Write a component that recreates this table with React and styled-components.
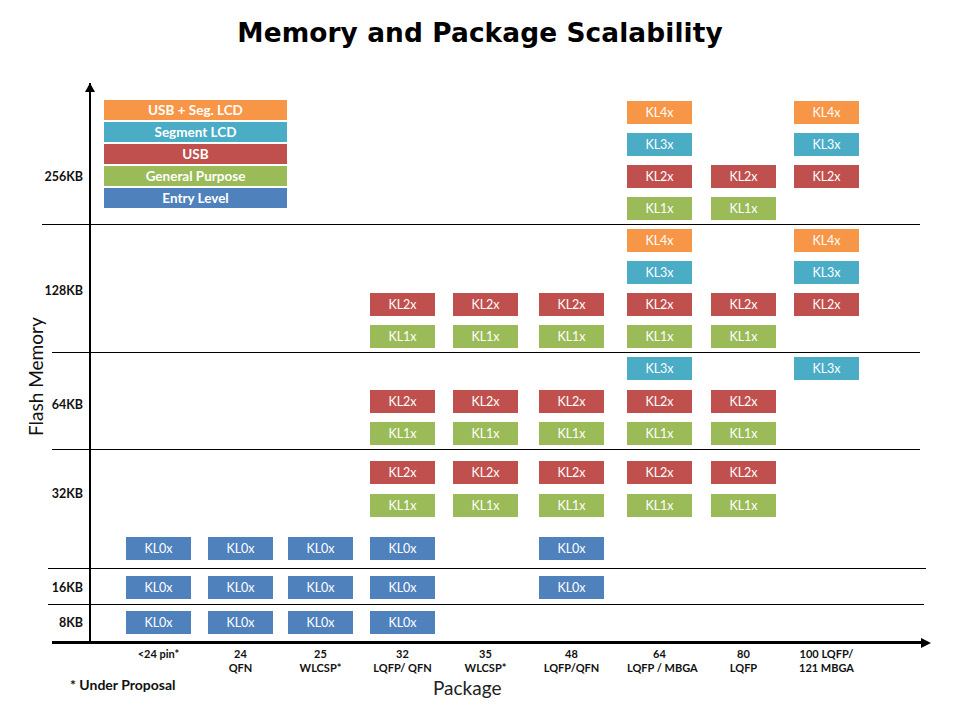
import React from "react";
import styled, { createGlobalStyle } from "styled-components";

const GlobalStyle = createGlobalStyle`
  html, body {
    margin: 0;
    padding: 0;
    background: #fff;
  }
  body {
    font-family: Lato, "Open Sans", "Liberation Sans", sans-serif;
    color: #000;
  }
`;

const COLORS = {
  kl0: "#4f81bd",
  kl1: "#9bbb59",
  kl2: "#c0504d",
  kl3: "#4bacc6",
  kl4: "#f79646",
};

const NAMES = { kl0: "KL0x", kl1: "KL1x", kl2: "KL2x", kl3: "KL3x", kl4: "KL4x" };

// spacer track, then one track per package column
const TRACKS = "22px 82px 80px 82px 83px 86px 88px 84px 83px 65px";

const legend = [
  { text: "USB + Seg. LCD", kind: "kl4" },
  { text: "Segment LCD", kind: "kl3" },
  { text: "USB", kind: "kl2" },
  { text: "General Purpose", kind: "kl1" },
  { text: "Entry Level", kind: "kl0" },
];

const packages = [
  ["<24 pin*"],
  ["24", "QFN"],
  ["25", "WLCSP*"],
  ["32", "LQFP/ QFN"],
  ["35", "WLCSP*"],
  ["48", "LQFP/QFN"],
  ["64", "LQFP / MBGA"],
  ["80", "LQFP"],
  ["100 LQFP/", "121 MBGA"],
];

// boxes: [row, package column (1-9), kind]
const bands = [
  {
    label: "256KB",
    labelTop: 86,
    height: 141,
    pad: 18,
    rows: "32px 32px 32px 23px",
    bleed: 10,
    right: 0,
    legend: true,
    boxes: [
      [1, 7, "kl4"], [2, 7, "kl3"], [3, 7, "kl2"], [4, 7, "kl1"],
      [3, 8, "kl2"], [4, 8, "kl1"],
      [1, 9, "kl4"], [2, 9, "kl3"], [3, 9, "kl2"],
    ],
  },
  {
    label: "128KB",
    labelTop: 58,
    height: 127,
    pad: 4,
    rows: "32px 32px 32px 23px",
    bleed: 0,
    right: 0,
    boxes: [
      [3, 4, "kl2"], [4, 4, "kl1"],
      [3, 5, "kl2"], [4, 5, "kl1"],
      [3, 6, "kl2"], [4, 6, "kl1"],
      [1, 7, "kl4"], [2, 7, "kl3"], [3, 7, "kl2"], [4, 7, "kl1"],
      [3, 8, "kl2"], [4, 8, "kl1"],
      [1, 9, "kl4"], [2, 9, "kl3"], [3, 9, "kl2"],
    ],
  },
  {
    label: "64KB",
    labelTop: 44,
    height: 96,
    pad: 4,
    rows: "33px 32px 23px",
    bleed: 0,
    right: 0,
    boxes: [
      [2, 4, "kl2"], [3, 4, "kl1"],
      [2, 5, "kl2"], [3, 5, "kl1"],
      [2, 6, "kl2"], [3, 6, "kl1"],
      [1, 7, "kl3"], [2, 7, "kl2"], [3, 7, "kl1"],
      [2, 8, "kl2"], [3, 8, "kl1"],
      [1, 9, "kl3"],
    ],
  },
  {
    label: "32KB",
    labelTop: 36,
    height: 118,
    pad: 11,
    rows: "33px 43px 23px",
    bleed: 4,
    right: -6,
    boxes: [
      [1, 4, "kl2"], [2, 4, "kl1"],
      [1, 5, "kl2"], [2, 5, "kl1"],
      [1, 6, "kl2"], [2, 6, "kl1"],
      [1, 7, "kl2"], [2, 7, "kl1"],
      [1, 8, "kl2"], [2, 8, "kl1"],
      [3, 1, "kl0"], [3, 2, "kl0"], [3, 3, "kl0"], [3, 4, "kl0"], [3, 6, "kl0"],
    ],
  },
  {
    label: "16KB",
    labelTop: 11,
    height: 35,
    pad: 7,
    rows: "23px",
    bleed: 4,
    right: -4,
    boxes: [[1, 1, "kl0"], [1, 2, "kl0"], [1, 3, "kl0"], [1, 4, "kl0"], [1, 6, "kl0"]],
  },
  {
    label: "8KB",
    labelTop: 10,
    height: 36,
    pad: 6,
    rows: "23px",
    bleed: 0,
    right: -2,
    axis: true,
    boxes: [[1, 1, "kl0"], [1, 2, "kl0"], [1, 3, "kl0"], [1, 4, "kl0"]],
  },
];

function App() {
  return (
    <Slide>
      <GlobalStyle />
      <Title>Memory and Package Scalability</Title>
      <Body>
        <YTitle>
          <span>Flash Memory</span>
        </YTitle>
        <Chart>
          {bands.map((band, i) => (
            <Band
              key={band.label}
              $height={band.height}
              $bleed={band.bleed}
              $right={band.right}
              $axis={band.axis}
            >
              <MemLabel $top={band.labelTop}>
                <span>{band.label}</span>
              </MemLabel>
              <Plot $pad={band.pad} $rows={band.rows}>
                {i === 0 && <UpArrow />}
                {band.legend && (
                  <Legend>
                    {legend.map((item) => (
                      <LegendItem key={item.text} $color={COLORS[item.kind]}>
                        {item.text}
                      </LegendItem>
                    ))}
                  </Legend>
                )}
                {band.boxes.map(([row, col, kind]) => (
                  <Chip
                    key={`${row}-${col}`}
                    $color={COLORS[kind]}
                    style={{ gridRow: row, gridColumn: col + 1 }}
                  >
                    {NAMES[kind]}
                  </Chip>
                ))}
              </Plot>
              {band.axis && <RightArrow />}
            </Band>
          ))}
        </Chart>
      </Body>
      <XLabels>
        {packages.map((lines, i) => (
          <XLabel key={i} style={{ gridColumn: i + 2 }}>
            {lines.map((line) => (
              <div key={line}>{line}</div>
            ))}
          </XLabel>
        ))}
      </XLabels>
      <Footer>
        <Note>* Under Proposal</Note>
        <AxisName>Package</AxisName>
      </Footer>
    </Slide>
  );
}

export default App;

const Slide = styled.div`
  width: 960px;
  height: 720px;
  overflow: hidden;
  background: #fff;
`;

const Title = styled.h1`
  margin: 0;
  padding-top: 18px;
  height: 30px;
  line-height: 30px;
  text-align: center;
  font-family: "DejaVu Sans", Verdana, sans-serif;
  font-weight: bold;
  font-size: 26.4px;
  letter-spacing: 0.1px;
  color: #000;
`;

const Body = styled.div`
  display: flex;
  margin-top: 35px;
`;

const YTitle = styled.div`
  width: 52px;
  flex: none;
  display: flex;
  justify-content: flex-end;
  padding-right: 6px;
  box-sizing: border-box;
  padding-top: 234px;

  span {
    writing-mode: vertical-rl;
    transform: rotate(180deg);
    font-size: 19px;
    line-height: 20px;
    color: #111;
    height: 120px;
    text-align: center;
    white-space: nowrap;
  }
`;

const Chart = styled.div`
  width: 868px;
  display: flex;
  flex-direction: column;
`;

const Band = styled.div`
  position: relative;
  display: grid;
  grid-template-columns: ${(p) => 37 + p.$bleed}px 1fr;
  height: ${(p) => p.$height}px;
  margin-left: ${(p) => -p.$bleed}px;
  margin-right: ${(p) => p.$right}px;
  border-bottom: ${(p) => (p.$axis ? "3px" : "1px")} solid #000;
`;

const MemLabel = styled.div`
  display: flex;
  justify-content: flex-end;
  align-items: flex-start;
  min-width: 0;
  margin-top: ${(p) => p.$top}px;
  padding-right: 6px;
  font-weight: bold;
  font-size: 12.5px;
  line-height: 15px;
  color: #111;
  white-space: nowrap;

  span {
    flex: none;
  }
`;

const Plot = styled.div`
  position: relative;
  border-left: 2px solid #000;
  padding: ${(p) => p.$pad}px 0 0 13px;
  display: grid;
  grid-template-columns: ${TRACKS};
  grid-template-rows: ${(p) => p.$rows};
  align-content: start;
  align-items: start;
`;

const Chip = styled.div`
  width: 65px;
  height: 23px;
  background: ${(p) => p.$color};
  color: #fff;
  font-size: 12.5px;
  line-height: 23px;
  text-align: center;
`;

const Legend = styled.div`
  grid-row: 1 / span 4;
  grid-column: 1 / span 4;
  width: 183px;
  margin-top: -1px;
  display: flex;
  flex-direction: column;
  gap: 2px;
`;

const LegendItem = styled.div`
  height: 20px;
  line-height: 20px;
  background: ${(p) => p.$color};
  color: #fff;
  font-weight: bold;
  font-size: 13.5px;
  text-align: center;
`;

const UpArrow = styled.span`
  position: absolute;
  top: 0;
  left: -6px;
  width: 0;
  height: 0;
  border-left: 5px solid transparent;
  border-right: 5px solid transparent;
  border-bottom: 9px solid #000;
`;

const RightArrow = styled.span`
  position: absolute;
  right: -9px;
  bottom: -6.5px;
  width: 0;
  height: 0;
  border-top: 5px solid transparent;
  border-bottom: 5px solid transparent;
  border-left: 10px solid #000;
`;

const XLabels = styled.div`
  display: grid;
  grid-template-columns: ${TRACKS};
  margin-left: 91px;
  padding-left: 13px;
  margin-top: 3px;
  height: 28px;
`;

const XLabel = styled.div`
  width: 65px;
  text-align: center;
  font-weight: bold;
  font-size: 11px;
  line-height: 14px;
  color: #111;
  white-space: nowrap;
`;

const Footer = styled.div`
  display: flex;
  align-items: flex-start;
  margin-top: 2px;
  padding-left: 70px;
`;

const Note = styled.div`
  width: 363px;
  flex: none;
  font-weight: bold;
  font-size: 14px;
  line-height: 16px;
  color: #111;
`;

const AxisName = styled.div`
  font-size: 19px;
  line-height: 22px;
  color: #222;
`;
